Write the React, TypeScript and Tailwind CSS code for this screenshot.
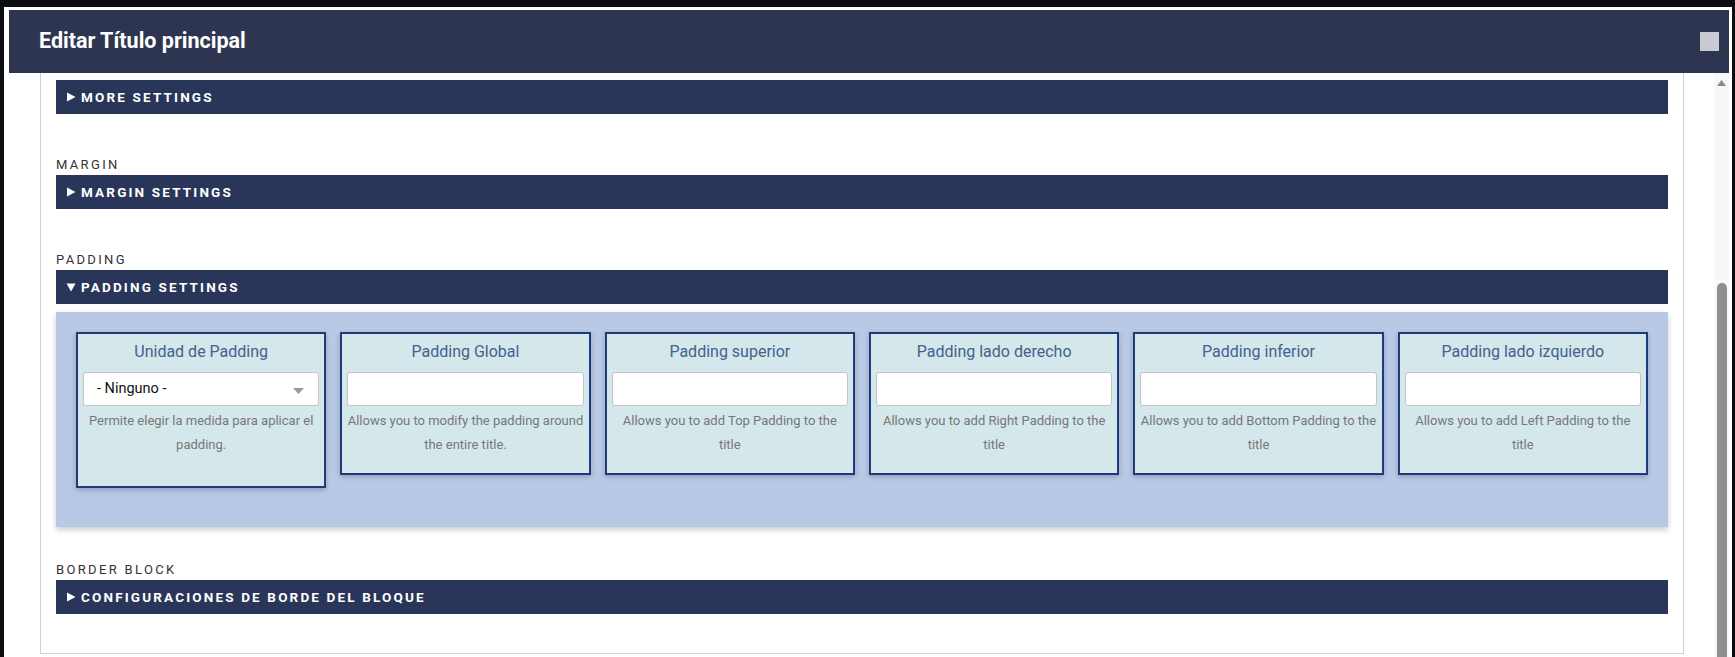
import React from 'react';

const cards = [
  { title: 'Unidad de Padding', desc: 'Permite elegir la medida para aplicar el padding.', select: true },
  { title: 'Padding Global', desc: 'Allows you to modify the padding around the entire title.' },
  { title: 'Padding superior', desc: 'Allows you to add Top Padding to the title' },
  { title: 'Padding lado derecho', desc: 'Allows you to add Right Padding to the title' },
  { title: 'Padding inferior', desc: 'Allows you to add Bottom Padding to the title' },
  { title: 'Padding lado izquierdo', desc: 'Allows you to add Left Padding to the title' },
];

function Arrow({ open }: { open?: boolean }) {
  return open ? (
    <svg width="10" height="10" viewBox="0 0 10 10" className="shrink-0">
      <path d="M0.5 1.5h9L5 9.5z" fill="#fff" />
    </svg>
  ) : (
    <svg width="10" height="10" viewBox="0 0 10 10" className="shrink-0">
      <path d="M1 0.5v9l8.5-4.5z" fill="#fff" />
    </svg>
  );
}

function Bar({ title, open }: { title: string; open?: boolean }) {
  return (
    <div className="h-[34px] bg-[#2a3659] flex items-center pl-[10px] gap-[5px] text-white font-bold text-[13.5px] tracking-[0.16em] uppercase">
      <Arrow open={open} />
      <span>{title}</span>
    </div>
  );
}

function Label({ text }: { text: string }) {
  return <div className="text-[13px] leading-[18px] tracking-[0.18em] text-[#333] uppercase">{text}</div>;
}

function Card({ title, desc, select }: { title: string; desc: string; select?: boolean }) {
  return (
    <div
      className={`border-2 border-[#1c3a7c] bg-[#d4e7eb] px-[5px] pt-[6px] shadow-[0_2px_5px_rgba(0,0,0,0.22)] ${select ? 'pb-[29px]' : 'pb-[16px]'}`}
    >
      <div className="text-center text-[16px] leading-[24px] text-[#44608f] mb-[8px]">{title}</div>
      {select ? (
        <div className="h-[34px] bg-white border border-[#c4c4c4] rounded-[3px] flex items-center justify-between pl-[13px] pr-[14px]">
          <span className="text-[14.5px] text-[#111]">- Ninguno -</span>
          <svg width="11" height="6" viewBox="0 0 11 6" className="mt-[3px]">
            <path d="M0 0h11L5.5 6z" fill="#9a9a9a" />
          </svg>
        </div>
      ) : (
        <div className="h-[34px] bg-white border border-[#c4c4c4] rounded-[3px]" />
      )}
      <p className="mt-[3px] text-center text-[13px] leading-[24px] text-[#777]">{desc}</p>
    </div>
  );
}

export default function App() {
  return (
    <div className="h-[657px] w-full overflow-hidden bg-[#0a0c10] pt-[7px] pl-[4px] pr-[3px]" style={{ fontFamily: 'Roboto, "Liberation Sans", sans-serif' }}>
      <div className="h-full bg-white flex flex-col pt-[3px] pl-[5px] pr-[3px]">
        <header className="h-[63px] shrink-0 bg-[#2e3551] flex items-center justify-between pl-[30px] pr-[10px]">
          <h1 className="text-white font-bold text-[21.5px]">Editar Título principal</h1>
          <span className="w-[19px] h-[19px] bg-[#c9cbd3]" />
        </header>

        <div className="flex-1 flex overflow-hidden pl-[31px]">
          <div className="w-[1644px] self-start border-x border-b border-[#d0d0d0] px-[15px] pt-[7px] pb-[39px]">
            <Bar title="More settings" />

            <div className="mt-[42px]">
              <Label text="Margin" />
              <div className="mt-px">
                <Bar title="Margin settings" />
              </div>
            </div>

            <div className="mt-[42px]">
              <Label text="Padding" />
              <div className="mt-px">
                <Bar title="Padding settings" open />
              </div>
              <div className="mt-[8px] bg-[#b8c9e6] px-5 pt-5 pb-[39px] grid grid-cols-6 gap-[14px] items-start shadow-[0_3px_6px_rgba(0,0,0,0.2)]">
                {cards.map(c => (
                  <Card key={c.title} {...c} />
                ))}
              </div>
            </div>

            <div className="mt-[34px]">
              <Label text="Border block" />
              <div className="mt-px">
                <Bar title="Configuraciones de borde del bloque" />
              </div>
            </div>
          </div>

          <div className="ml-[30px] w-[15px] shrink-0 bg-[#f8f8f8] flex flex-col items-center">
            <svg width="9" height="6" viewBox="0 0 9 6" className="mt-[7px]">
              <path d="M4.5 0L9 6H0z" fill="#8a8a8a" />
            </svg>
            <div className="mt-[197px] w-[10px] flex-1 bg-[#8e8e8e] rounded-t-[5px]" />
          </div>
        </div>
      </div>
    </div>
  );
}
